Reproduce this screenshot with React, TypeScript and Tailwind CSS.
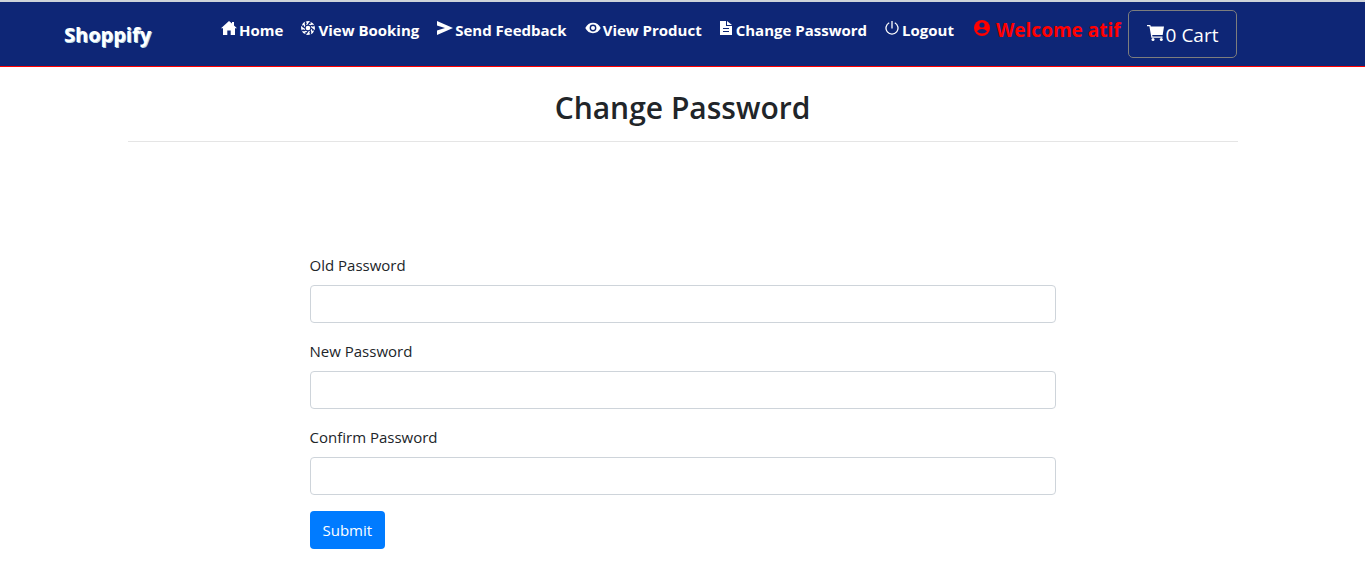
import React from "react";

function HomeIcon() {
  return (
    <svg viewBox="0 0 16 14" className="mr-0.5 h-3.5 w-4" fill="currentColor" aria-hidden="true">
      <path d="M8 0l3 2.6V1h2v3.4L16 7.3h-2V14H9.7V9.5H6.3V14H2V7.3H0z" />
    </svg>
  );
}

function ApertureIcon() {
  const blades = [0, 45, 90, 135, 180, 225, 270, 315];
  return (
    <svg viewBox="-7 -7 14 14" className="mr-[3px] size-3.5" fill="currentColor" aria-hidden="true">
      {blades.map((angle) => (
        <path key={angle} transform={`rotate(${angle})`} d="M-2.4-6.2Q0-7.5 2.2-6.5Q.2-5.4-.3-3.5L-2-2.9Q-1.8-4.4-1-5.1Q-1.8-5.2-2.4-6.2z" />
      ))}
      <circle r="2.3" />
    </svg>
  );
}

function SendIcon() {
  return (
    <svg viewBox="0 0 16 14" className="mr-0.5 h-3.5 w-4" fill="currentColor" aria-hidden="true">
      <path d="M0 0l16 7L0 14V9.5l8-2.5-8-2.500z" />
    </svg>
  );
}

function EyeIcon() {
  return (
    <svg viewBox="0 0 16 14" className="mr-0.5 h-3.5 w-4" fill="currentColor" aria-hidden="true">
      <path fillRule="evenodd" d="M.3 7Q3 1.8 8 1.8T15.7 7Q13 12.2 8 12.2T.3 7zM8 3.6a3.4 3.4 0 100 6.8 3.4 3.4 0 000-6.8z" />
      <circle cx="8" cy="7" r="2" />
    </svg>
  );
}

function DocumentIcon() {
  return (
    <svg viewBox="0 0 12 14" className="mr-1 h-3.5 w-3" fill="currentColor" aria-hidden="true">
      <path fillRule="evenodd" d="M0 0h6v5h6v9H0zM7 0l5 4H7zM3 7v1h6V7zM3 10v1h6v-1z" />
    </svg>
  );
}

function PowerIcon() {
  return (
    <svg viewBox="0 0 14 14" className="mr-[3px] size-3.5" fill="none" stroke="currentColor" strokeWidth="1.3" aria-hidden="true">
      <path d="M7 0v7.5M4.2 1.8a6 6 0 105.6 0" />
    </svg>
  );
}

function ContactIcon() {
  return (
    <svg viewBox="0 0 16 16" className="mb-1 size-4" aria-hidden="true">
      <circle cx="8" cy="8" r="8" fill="currentColor" />
      <circle cx="8" cy="5" r="2.6" fill="#0e2676" />
      <path d="M3 11.2Q5 9 8 9t5 2.2Q11.3 13.6 8 13.6T3 11.2z" fill="#0e2676" />
    </svg>
  );
}

function CartIcon() {
  return (
    <svg viewBox="0 0 17 16" className="mr-0.5 h-4 w-[17px]" fill="currentColor" aria-hidden="true">
      <path d="M0 0h3.3l.5 1.5H17L15.7 10H5.2l.3 1.5h10v1.2H4.4L2.4 1.2H0z" />
      <circle cx="6" cy="14.4" r="1.5" />
      <circle cx="14.3" cy="14.4" r="1.5" />
    </svg>
  );
}

const links = [
  { label: "Home", icon: <HomeIcon /> },
  { label: "View Booking", icon: <ApertureIcon /> },
  { label: "Send Feedback", icon: <SendIcon /> },
  { label: "View Product", icon: <EyeIcon /> },
  { label: "Change Password", icon: <DocumentIcon /> },
  { label: "Logout", icon: <PowerIcon /> },
];

const fields = [
  { id: "old-password", label: "Old Password" },
  { id: "new-password", label: "New Password" },
  { id: "confirm-password", label: "Confirm Password" },
];

export default function App() {
  return (
    <div className="bg-white font-['Open_Sans','Noto_Sans',sans-serif] text-[#212529]">
      <header className="border-t-2 border-b border-t-[#ced4da] border-b-[#ff0000] bg-[#0e2676]">
        <nav className="flex h-16 items-center pl-16 text-white" aria-label="Main">
          <a href="#" className="mr-[70px] pt-0.5 text-xl font-bold [text-shadow:1px_1px_0_#b8dce8]">Shoppify</a>
          <ul className="flex items-center gap-[18px] pb-2">
            {links.map((link) => (
              <li key={link.label}>
                <a href="#" className="flex items-center whitespace-nowrap text-[15px] leading-6 font-bold">
                  <span className="pb-1">{link.icon}</span>
                  {link.label}
                </a>
              </li>
            ))}
          </ul>
          <p className="ml-5 flex items-center gap-1.5 pb-2 text-[19px] leading-6 font-bold whitespace-nowrap text-[#ff0000]">
            <ContactIcon />
            Welcome atif
          </p>
          <button type="button" className="ml-[7px] flex h-12 items-center rounded-[5px] border border-[#7d7d7d] px-[18px] pt-0.5 text-[19px] whitespace-nowrap">
            <span className="pb-1"><CartIcon /></span>
            0 Cart
          </button>
        </nav>
      </header>
      <main className="mx-auto max-w-[1110px]">
        <h1 className="border-b border-[#e5e5e5] pt-[22px] pb-[14px] text-center text-[30px] leading-[38px] font-semibold">
          Change Password
        </h1>
        <form className="mx-auto mt-[111px] flex max-w-[746px] flex-col gap-4" onSubmit={(e) => e.preventDefault()}>
          {fields.map((field) => (
            <div key={field.id} className="flex flex-col gap-2">
              <label htmlFor={field.id} className="text-[15px] leading-6">{field.label}</label>
              <input id={field.id} type="password" className="h-[38px] w-full rounded border border-[#ced4da] bg-white px-3" />
            </div>
          ))}
          <button type="submit" className="h-[38px] self-start rounded bg-[#007bff] px-[13px] text-[15px] text-white">
            Submit
          </button>
        </form>
      </main>
    </div>
  );
}
